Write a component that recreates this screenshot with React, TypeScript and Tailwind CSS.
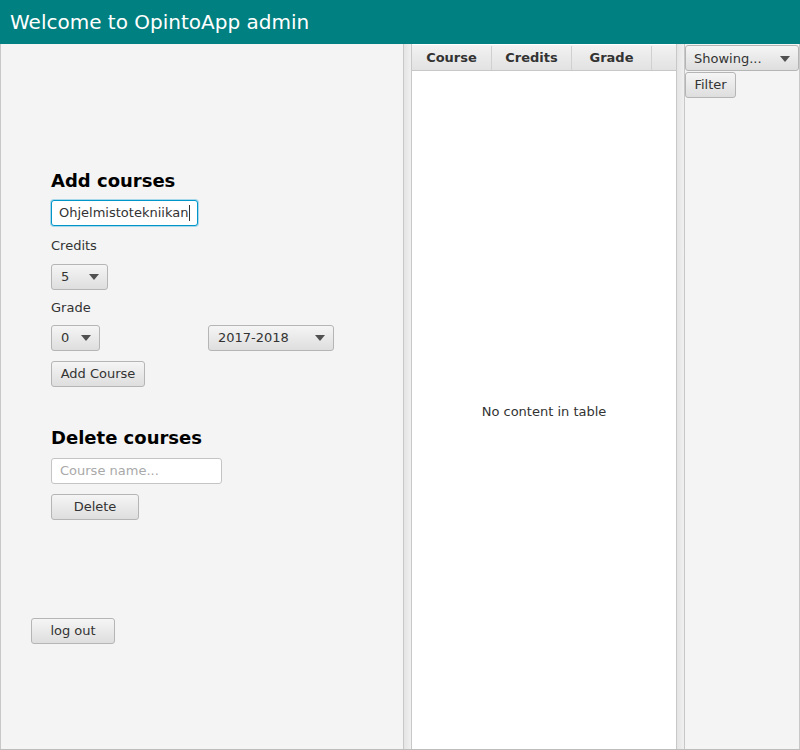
const font = { fontFamily: '"DejaVu Sans", "Liberation Sans", sans-serif' };

function Arrow() {
  return (
    <svg width="10" height="6" viewBox="0 0 10 6" className="shrink-0">
      <path d="M0 0 L10 0 L5 6 Z" fill="#505050" />
    </svg>
  );
}

function Combo({ value, w }: { value: string; w: string }) {
  return (
    <div
      className={`flex h-[26px] ${w} items-center justify-between rounded-[3px] border border-[#b5b5b5] bg-gradient-to-b from-[#f5f5f5] to-[#dedede] pl-[9px] pr-[8px] text-[13px] text-[#333]`}
    >
      <span>{value}</span>
      <Arrow />
    </div>
  );
}

function Btn({ label, w }: { label: string; w: string }) {
  return (
    <div
      className={`flex h-[26px] ${w} items-center justify-center rounded-[3px] border border-[#b5b5b5] bg-gradient-to-b from-[#f5f5f5] to-[#dedede] text-[13px] text-[#333]`}
    >
      {label}
    </div>
  );
}

export default function App() {
  return (
    <div className="flex h-[750px] w-[800px] flex-col bg-[#f4f4f4]" style={font}>
      <div className="flex h-[44px] items-center bg-[#008080] pl-[10px] text-[20px] text-white">
        Welcome to OpintoApp admin
      </div>
      <div className="flex flex-1 border-b border-[#bdbdbd]">
        {/* left pane */}
        <div className="flex w-[404px] flex-col border-l border-r border-[#c8c8c8] bg-[#f4f4f4]">
          <div className="flex flex-col pl-[50px] pt-[126px]">
            <div className="text-[18px] font-bold leading-[22px] text-black">Add courses</div>
            <div className="mt-[8px] flex h-[26px] w-[147px] items-center rounded-[3px] border border-[#0096c9] bg-white pl-[7px] text-[13px] text-[#333] shadow-[0_0_0_1px_#a8d8ea]">
              Ohjelmistotekniikan
              <span className="ml-[1px] inline-block h-[16px] w-[1px] bg-[#333]" />
            </div>
            <div className="mt-[12px] text-[13px] leading-[16px] text-[#333]">Credits</div>
            <div className="mt-[10px]">
              <Combo value="5" w="w-[57px]" />
            </div>
            <div className="mt-[10px] text-[13px] leading-[16px] text-[#333]">Grade</div>
            <div className="mt-[9px] flex gap-[108px]">
              <Combo value="0" w="w-[49px]" />
              <Combo value="2017-2018" w="w-[126px]" />
            </div>
            <div className="mt-[10px]">
              <Btn label="Add Course" w="w-[94px]" />
            </div>
            <div className="mt-[40px] text-[18px] font-bold leading-[22px] text-black">Delete courses</div>
            <div className="mt-[9px] flex h-[26px] w-[171px] items-center rounded-[3px] border border-[#c4c4c4] bg-white pl-[8px] text-[13px] text-[#a9a9a9]">
              Course name...
            </div>
            <div className="mt-[10px]">
              <Btn label="Delete" w="w-[88px]" />
            </div>
          </div>
          <div className="mt-[98px] pl-[30px]">
            <Btn label="log out" w="w-[84px]" />
          </div>
        </div>
        {/* divider */}
        <div className="w-[7px] bg-gradient-to-r from-[#e4e4e4] to-[#f0f0f0]" />
        {/* table */}
        <div className="flex w-[266px] flex-col border-l border-r border-[#c8c8c8] bg-white">
          <div className="mt-[1px] flex h-[26px] border-b border-[#c8c8c8] bg-gradient-to-b from-[#f2f2f2] to-[#e2e2e2] pt-[1px] text-[13px] font-bold text-[#333]">
            <div className="flex w-[80px] items-center justify-center border-r border-[#d0d0d0]">Course</div>
            <div className="flex w-[80px] items-center justify-center border-r border-[#d0d0d0]">Credits</div>
            <div className="flex w-[80px] items-center justify-center border-r border-[#d0d0d0]">Grade</div>
            <div className="flex-1" />
          </div>
          <div className="flex flex-1 items-start justify-center pt-[331px] text-[13px] text-[#333]">
            No content in table
          </div>
        </div>
        {/* divider */}
        <div className="w-[7px] bg-gradient-to-r from-[#e4e4e4] to-[#f0f0f0]" />
        {/* right pane */}
        <div className="flex flex-1 flex-col border-l border-r border-[#c8c8c8] bg-[#f4f4f4]">
          <div className="mt-[1px] flex h-[26px] w-[114px] items-center justify-between rounded-[3px] border border-[#b5b5b5] bg-gradient-to-b from-[#f5f5f5] to-[#dedede] pl-[8px] pr-[8px] pt-[1px] text-[13px] text-[#333]">
            <span>Showing...</span>
            <Arrow />
          </div>
          <div className="mt-[1px]">
            <Btn label="Filter" w="w-[51px]" />
          </div>
        </div>
      </div>
    </div>
  );
}
